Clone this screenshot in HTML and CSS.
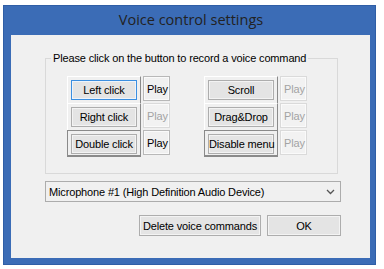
FILE: index.html
```html
<!DOCTYPE html>
<html>
<head>
<meta charset="utf-8">
<link rel="stylesheet" href="styles.css">
</head>
<body>
<div class="window">
  <div class="titlebar">Voice control settings</div>
  <div class="client">
    <fieldset class="group">
      <legend class="group-label">Please click on the button to record a voice command</legend>
      <div class="cols">
        <div class="col">
          <div class="row">
            <div class="cell raised"><button class="btn focused">Left click</button></div>
            <button class="play">Play</button>
          </div>
          <div class="row">
            <div class="cell raised"><button class="btn">Right click</button></div>
            <button class="play" disabled>Play</button>
          </div>
          <div class="row">
            <div class="cell sunken"><button class="btn">Double click</button></div>
            <button class="play">Play</button>
          </div>
        </div>
        <div class="col">
          <div class="row">
            <div class="cell raised"><button class="btn">Scroll</button></div>
            <button class="play" disabled>Play</button>
          </div>
          <div class="row">
            <div class="cell raised"><button class="btn">Drag&amp;Drop</button></div>
            <button class="play" disabled>Play</button>
          </div>
          <div class="row">
            <div class="cell sunken"><button class="btn">Disable menu</button></div>
            <button class="play" disabled>Play</button>
          </div>
        </div>
      </div>
    </fieldset>
    <div class="combo">
      <span class="combo-text">Microphone #1 (High Definition Audio Device)</span>
      <svg class="chevron" width="9" height="6" viewBox="0 0 9 6"><path d="M1 1 L4.5 4.5 L8 1" fill="none" stroke="#555" stroke-width="1.3"/></svg>
    </div>
    <div class="actions">
      <button class="btn wide">Delete voice commands</button>
      <button class="btn ok">OK</button>
    </div>
  </div>
</div>
</body>
</html>
```

FILE: styles.css
```css
html, body {
  margin: 0;
  padding: 0;
  background: #ffffff;
  width: 384px;
  height: 269px;
  overflow: hidden;
}
body {
  padding: 5px 0 0 3px;
  box-sizing: border-box;
  font-family: "Liberation Sans", Arial, sans-serif;
}
.window {
  width: 373px;
  height: 260px;
  background: #3b6cb6;
  box-sizing: border-box;
  border: 1px solid #2f5ea6;
  display: flex;
  flex-direction: column;
}
.titlebar {
  height: 29px;
  line-height: 28px;
  text-align: center;
  font-family: "Open Sans", "Noto Sans", sans-serif;
  font-size: 14.5px;
  color: #222222;
  padding-left: 3px;
}
.client {
  margin: 0 5px 6px 7px;
  flex: 1;
  background: #f0f0f0;
  padding: 17px 0 0 34px;
  box-sizing: border-box;
  font-size: 11px;
  letter-spacing: -0.15px;
  color: #000;
  white-space: nowrap;
}
.group {
  margin: 0;
  padding: 0;
  width: 293px;
  height: 122px;
  box-sizing: border-box;
  border: 1px solid #d9d9d9;
  min-width: 0;
}
.group-label {
  padding: 0 2px;
  margin-left: 5px;
  line-height: 13px;
  font-size: 11px;
  white-space: nowrap;
}
.cols {
  display: flex;
  gap: 34px;
  margin-top: 11px;
  margin-left: 21px;
}
.col {
  display: flex;
  flex-direction: column;
}
.row {
  display: flex;
  gap: 2px;
  height: 27px;
}
.cell {
  width: 74px;
  height: 27px;
  box-sizing: border-box;
  padding: 3px 3px 0 3px;
  background: #f0f0f0;
}
.cell.raised {
  border-top: 1px solid #ffffff;
  border-left: 1px solid #ffffff;
  border-right: 1px solid #8a8a8a;
}
.cell.sunken {
  border-top: 1px solid #8a8a8a;
  border-left: 1px solid #8a8a8a;
  border-right: 1px solid #8a8a8a;
  border-bottom: 2px solid #8a8a8a;
  padding-top: 3px;
}
button {
  font-family: "Liberation Sans", Arial, sans-serif;
  font-size: 11px;
  letter-spacing: -0.15px;
  color: #000;
  margin: 0;
  padding: 0;
  white-space: nowrap;
}
.btn {
  width: 66px;
  height: 20px;
  border: 1px solid #adadad;
  background: #e4e4e4;
  box-shadow: inset 0 0 0 1px #f3f3f3;
}
.btn.focused {
  border-color: #3c8fe0;
  box-shadow: inset 0 0 0 1px #eef4fb;
}
.play {
  width: 27px;
  height: 25px;
  border: 1px solid #b8b8b8;
  background: #f0f0f0;
  box-shadow: inset 0 0 0 1px #fafafa;
  text-align: left;
  padding-left: 3px;
}
.play:disabled {
  color: #a3a3a3;
  border-color: #dadada;
  background: #f2f2f2;
}
.combo {
  margin-top: 7px;
  width: 296px;
  height: 21px;
  box-sizing: border-box;
  border: 1px solid #acacac;
  background: #f0f0f0;
  display: flex;
  align-items: center;
  justify-content: space-between;
  padding: 0 5px 0 3px;
  font-size: 11px;
}
.chevron {
  display: block;
}
.actions {
  margin-top: 13px;
  width: 296px;
  display: flex;
  justify-content: flex-end;
  gap: 6px;
}
.btn.wide {
  width: 122px;
  height: 21px;
}
.btn.ok {
  width: 74px;
  height: 21px;
}
```
